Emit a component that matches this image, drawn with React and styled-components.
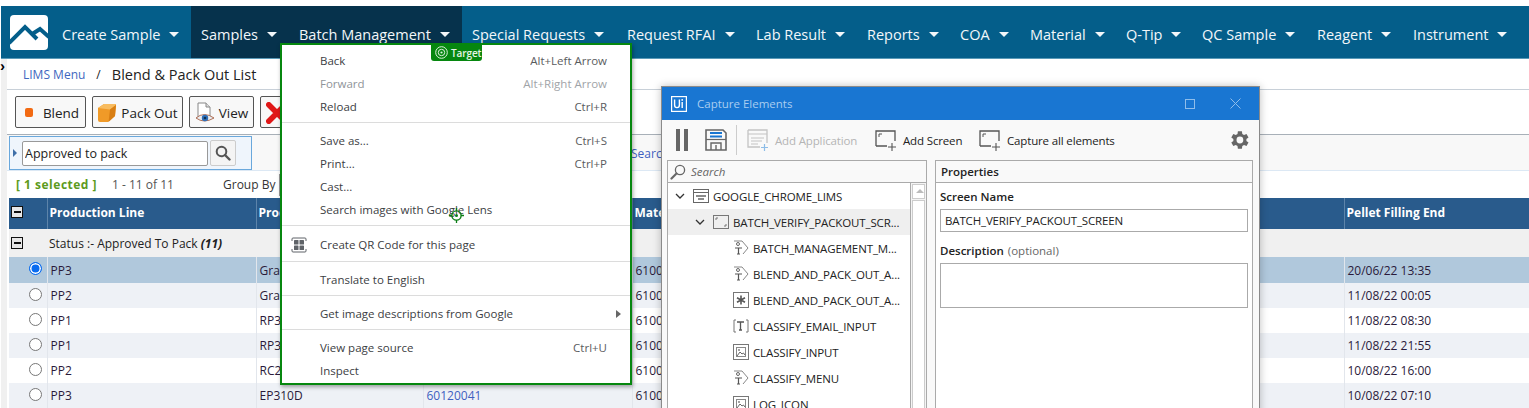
import React from "react"
import styled, { createGlobalStyle } from "styled-components"

const GlobalStyle = createGlobalStyle`
  html, body {
    margin: 0;
    height: 408px;
    overflow: hidden;
    background: #fff;
    font-family: "Open Sans", "Noto Sans", sans-serif;
  }
  * { box-sizing: border-box; }
`

const navItems = [
  { label: "Create Sample", width: 139 },
  { label: "Samples", width: 98, active: true },
  { label: "Batch Management", width: 173, active: true },
  { label: "Special Requests", width: 155 },
  { label: "Request RFAI", width: 129 },
  { label: "Lab Result", width: 111 },
  { label: "Reports", width: 93 },
  { label: "COA", width: 70 },
  { label: "Material", width: 96 },
  { label: "Q-Tip", width: 76 },
  { label: "QC Sample", width: 115 },
  { label: "Reagent", width: 96 },
  { label: "Instrument", width: 112 },
]

const rows = [
  { line: "PP3", product: "Grade", end: "20/06/22 13:35", selected: true },
  { line: "PP2", product: "Grade", end: "11/08/22 00:05", alt: true },
  { line: "PP1", product: "RP310", end: "11/08/22 08:30" },
  { line: "PP1", product: "RP310", end: "11/08/22 21:55", alt: true },
  { line: "PP2", product: "RC210", end: "10/08/22 16:00" },
  { line: "PP3", product: "EP310D", link: "60120041", end: "10/08/22 07:10", alt: true },
]

const menuGroups = [
  [
    { label: "Back", keys: "Alt+Left Arrow" },
    { label: "Forward", keys: "Alt+Right Arrow", disabled: true },
    { label: "Reload", keys: "Ctrl+R" },
  ],
  [
    { label: "Save as...", keys: "Ctrl+S" },
    { label: "Print...", keys: "Ctrl+P" },
    { label: "Cast..." },
    { label: "Search images with Google Lens" },
  ],
  [{ label: "Create QR Code for this page", qr: true }],
  [{ label: "Translate to English" }],
  [{ label: "Get image descriptions from Google", more: true }],
  [
    { label: "View page source", keys: "Ctrl+U" },
    { label: "Inspect" },
  ],
]

const treeItems = [
  { label: "GOOGLE_CHROME_LIMS", level: 0, icon: "app", open: true },
  { label: "BATCH_VERIFY_PACKOUT_SCR...", level: 1, icon: "screen", open: true, selected: true },
  { label: "BATCH_MANAGEMENT_M...", level: 2, icon: "tag" },
  { label: "BLEND_AND_PACK_OUT_A...", level: 2, icon: "tag" },
  { label: "BLEND_AND_PACK_OUT_A...", level: 2, icon: "star" },
  { label: "CLASSIFY_EMAIL_INPUT", level: 2, icon: "input" },
  { label: "CLASSIFY_INPUT", level: 2, icon: "image" },
  { label: "CLASSIFY_MENU", level: 2, icon: "tag" },
  { label: "LOG_ICON", level: 2, icon: "image" },
]

const Logo = () => (
  <svg width="38" height="36" viewBox="0 0 38 36">
    <rect x="0" y="0" width="38" height="35" rx="4" fill="#fff" />
    <path d="M-1 28 L15 12 L27 24" fill="none" stroke="#045e8a" strokeWidth="4" />
    <path d="M23 18.5 L30 14 L39 22" fill="none" stroke="#045e8a" strokeWidth="4" />
  </svg>
)

const CubeIcon = () => (
  <svg width="20" height="20" viewBox="0 0 20 20">
    <path d="M1 5 L7 1 H18 Q19 1 19 2 L18 13 L11 19 L3 19 Q1 19 1 17 Z" fill="#f09a28" />
    <path d="M1 5 L7 1 H18 Q19 1 19 2 L13 6.5 Z" fill="#f8bc60" />
    <path d="M13 6.5 L19 2 L18 13 L11.5 19 Z" fill="#d97f14" />
  </svg>
)

const ViewIcon = () => (
  <svg width="20" height="22" viewBox="0 0 20 22">
    <path d="M3 1 H11 L15 5 V16 H3 Z" fill="#fff" stroke="#888" />
    <path d="M11 1 V5 H15" fill="#ddd" stroke="#888" />
    <path d="M1 16 Q9 9 19 16 Q9 22 1 16 Z" fill="#e9edf2" stroke="#a05030" strokeWidth="0.8" />
    <circle cx="10" cy="16" r="3.2" fill="#2f6fb8" />
    <circle cx="10" cy="16" r="1.3" fill="#12304f" />
  </svg>
)

const CrossIcon = () => (
  <svg width="22" height="22" viewBox="0 0 24 24">
    <path d="M3 3 L21 21 M21 3 L3 21" stroke="#e01818" strokeWidth="6" strokeLinecap="round" />
  </svg>
)

const SearchIcon = ({ size = 16, color = "#555" }) => (
  <svg width={size} height={size} viewBox="0 0 16 16">
    <circle cx="6.5" cy="6.5" r="4.8" fill="none" stroke={color} strokeWidth="2" />
    <path d="M10 10 L14.5 14.5" stroke={color} strokeWidth="2.4" strokeLinecap="round" />
  </svg>
)

const TreeSearchIcon = () => (
  <svg width="16" height="16" viewBox="0 0 16 16">
    <circle cx="10" cy="6" r="4.6" fill="none" stroke="#666" strokeWidth="1.3" />
    <path d="M6.5 9.5 L1.5 14.5" stroke="#666" strokeWidth="2.2" strokeLinecap="round" />
  </svg>
)

const QrIcon = () => (
  <svg width="16" height="16" viewBox="0 0 16 16">
    <path d="M1 4 V2 Q1 1 2 1 H14 Q15 1 15 2 V4 M1 12 V14 Q1 15 2 15 H14 Q15 15 15 14 V12" fill="none" stroke="#5f6368" />
    <rect x="3" y="3" width="4.5" height="4.5" rx="0.6" fill="#5f6368" />
    <rect x="8.5" y="3" width="4.5" height="4.5" rx="0.6" fill="#5f6368" />
    <rect x="3" y="8.5" width="4.5" height="4.5" rx="0.6" fill="#5f6368" />
    <rect x="8.5" y="8.5" width="4.5" height="4.5" rx="0.6" fill="#5f6368" />
  </svg>
)

const TargetIcon = () => (
  <svg width="13" height="13" viewBox="0 0 13 13">
    <circle cx="6.5" cy="6.5" r="5.8" fill="none" stroke="#dff2df" />
    <circle cx="6.5" cy="6.5" r="3.2" fill="none" stroke="#dff2df" />
    <circle cx="6.5" cy="6.5" r="1.1" fill="#dff2df" />
  </svg>
)

const LensCursor = () => (
  <svg width="15" height="15" viewBox="0 0 15 15">
    <circle cx="7.5" cy="7.5" r="4.6" fill="none" stroke="#0b7d16" strokeWidth="1.4" />
    <circle cx="7.5" cy="7.5" r="1.5" fill="#0b7d16" />
    <path d="M7.5 0 V3 M7.5 12 V15 M0 7.5 H3 M12 7.5 H15" stroke="#0b7d16" strokeWidth="1.3" />
  </svg>
)

const UiLogo = () => (
  <svg width="16" height="16" viewBox="0 0 16 16">
    <rect x="0.6" y="0.6" width="14.8" height="14.8" fill="none" stroke="#fff" strokeWidth="1.2" />
    <path d="M3.6 3.5 V9 Q3.6 11.6 6 11.6 Q8.4 11.6 8.4 9 V3.5" fill="none" stroke="#fff" strokeWidth="1.4" />
    <path d="M11.2 6 V12" stroke="#fff" strokeWidth="1.4" />
    <circle cx="11.2" cy="3.9" r="0.9" fill="#fff" />
  </svg>
)

const SaveIcon = () => (
  <svg width="22" height="22" viewBox="0 0 22 22">
    <path d="M1 1 H18 L21 4 V21 H1 Z" fill="none" stroke="#666" strokeWidth="1.6" />
    <rect x="5" y="3" width="12" height="2" fill="#1976d2" />
    <rect x="5" y="6.5" width="12" height="2" fill="#1976d2" />
    <path d="M1 10.5 H21" stroke="#666" strokeWidth="1.2" />
    <path d="M6 21 V14 H16 V21 M11 16 V21" fill="none" stroke="#666" strokeWidth="1.4" />
  </svg>
)

const AddAppIcon = () => (
  <svg width="22" height="22" viewBox="0 0 22 22">
    <path d="M1 1 H20 V14 M1 1 V18 H13" fill="none" stroke="#c4c4c4" strokeWidth="1.3" />
    <path d="M1 5 H20 M4 9 H17 M4 12 H15 M4 15 H11" stroke="#c4c4c4" strokeWidth="1.1" />
    <path d="M17.5 15 V22 M14 18.5 H21" stroke="#8dbde8" strokeWidth="1.2" />
  </svg>
)

const AddScreenIcon = () => (
  <svg width="22" height="21" viewBox="0 0 22 21">
    <path d="M1 16 V1 H20 V11 M1 16 H12" fill="none" stroke="#555" strokeWidth="1.3" />
    <path d="M4 7 V4 H7" fill="none" stroke="#555" />
    <path d="M17 13 V21 M13 17 H21" stroke="#555" strokeWidth="1.1" />
  </svg>
)

const GearIcon = () => (
  <svg width="24" height="24" viewBox="0 0 24 24">
    <path
      fill="#666"
      d="M19.4 13a7.6 7.6 0 0 0 0-2l2.1-1.6-2-3.5-2.5 1a7.6 7.6 0 0 0-1.7-1L14.9 3.2h-4l-.4 2.7a7.6 7.6 0 0 0-1.7 1l-2.5-1-2 3.5L6.4 11a7.6 7.6 0 0 0 0 2l-2.1 1.6 2 3.5 2.5-1a7.6 7.6 0 0 0 1.7 1l.4 2.7h4l.4-2.7a7.6 7.6 0 0 0 1.7-1l2.5 1 2-3.5zM12.9 15.4a3.4 3.4 0 1 1 0-6.8 3.4 3.4 0 0 1 0 6.8z"
    />
  </svg>
)

const Chevron = () => (
  <svg width="10" height="7" viewBox="0 0 10 7">
    <path d="M1 1 L5 5 L9 1" fill="none" stroke="#333" strokeWidth="1.3" />
  </svg>
)

const TreeIcon = ({ type }) => {
  if (type === "app") {
    return (
      <svg width="16" height="16" viewBox="0 0 16 16">
        <rect x="0.5" y="1.5" width="15" height="13" fill="none" stroke="#666" />
        <path d="M1 4.5 H15" stroke="#666" />
        <path d="M3 8 H13 M5 11 H11" stroke="#666" strokeWidth="1.3" />
      </svg>
    )
  }
  if (type === "screen") {
    return (
      <svg width="16" height="16" viewBox="0 0 16 16">
        <rect x="0.5" y="1.5" width="15" height="13" fill="none" stroke="#777" />
        <path d="M3 6 V4 H5 M13 10 V12 H11" fill="none" stroke="#777" />
      </svg>
    )
  }
  if (type === "tag") {
    return (
      <svg width="16" height="16" viewBox="0 0 16 16">
        <path d="M1 1 H9 L15 8 L10 14" fill="none" stroke="#888" />
        <circle cx="5" cy="4" r="1.5" fill="none" stroke="#666" />
        <path d="M2 8 H9 M5.5 8 V14 M4 14 H7" fill="none" stroke="#555" strokeWidth="1.2" />
      </svg>
    )
  }
  if (type === "star") {
    return (
      <svg width="16" height="16" viewBox="0 0 16 16">
        <rect x="0.5" y="0.5" width="15" height="15" fill="none" stroke="#777" />
        <path d="M8 3.5 V12.5 M4 5.8 L12 10.2 M12 5.8 L4 10.2" stroke="#555" strokeWidth="1.6" />
      </svg>
    )
  }
  if (type === "input") {
    return (
      <svg width="16" height="16" viewBox="0 0 16 16">
        <path d="M3 2 H1 V14 H3 M13 2 H15 V14 H13" fill="none" stroke="#777" />
        <path d="M4 4 H11 M7.5 4 V12 M6 12 H9" fill="none" stroke="#555" strokeWidth="1.3" />
      </svg>
    )
  }
  return (
    <svg width="16" height="16" viewBox="0 0 16 16">
      <rect x="0.5" y="0.5" width="15" height="15" fill="none" stroke="#777" />
      <rect x="3.5" y="3.5" width="9" height="9" fill="none" stroke="#888" />
      <path d="M4 12 L7 8 L9 10 L10.5 9 L12 11" fill="none" stroke="#666" />
      <circle cx="6" cy="6" r="0.9" fill="#777" />
    </svg>
  )
}

const App = () => {
  return (
    <Page>
      <GlobalStyle />
      <Nav>
        <LogoSlot>
          <Logo />
        </LogoSlot>
        {navItems.map((item) => (
          <NavItem key={item.label} $width={item.width} $active={item.active}>
            {item.label}
            <Caret />
          </NavItem>
        ))}
      </Nav>
      <Body>
        <Gutter>
          <GutterArrow>›</GutterArrow>
        </Gutter>
        <Main>
          <Breadcrumb>
            <CrumbLink>LIMS Menu</CrumbLink>
            <CrumbSep>/</CrumbSep>
            <CrumbTitle>Blend &amp; Pack Out List</CrumbTitle>
          </Breadcrumb>
          <Toolbar>
            <ToolButton $width={71}>
              <BlendMark />
              Blend
            </ToolButton>
            <ToolButton $width={91}>
              <CubeIcon />
              Pack Out
            </ToolButton>
            <ToolButton $width={65}>
              <ViewIcon />
              View
            </ToolButton>
            <ToolButton $width={40} $start>
              <CrossIcon />
            </ToolButton>
          </Toolbar>
          <FilterBar>
            <FilterBox>
              <FilterArrow />
              <FilterInput readOnly value="Approved to pack" />
              <FilterSearch>
                <SearchIcon />
              </FilterSearch>
            </FilterBox>
            <SearchLink>Search</SearchLink>
          </FilterBar>
          <StatusRow>
            <Selected>[ 1 selected ]</Selected>
            <Pager>1 - 11 of 11</Pager>
            <GroupBy>Group By</GroupBy>
            <GroupBox />
          </StatusRow>
          <Grid>
            <colgroup>
              <col style={{ width: 38 }} />
              <col style={{ width: 209 }} />
              <col style={{ width: 167 }} />
              <col style={{ width: 209 }} />
              <col style={{ width: 712 }} />
              <col />
            </colgroup>
            <thead>
              <tr>
                <HeadCell>
                  <MinusBox $onDark />
                </HeadCell>
                <HeadCell>Production Line</HeadCell>
                <HeadCell>Product</HeadCell>
                <HeadCell>Material</HeadCell>
                <HeadCell>Material</HeadCell>
                <HeadCell>Pellet Filling End</HeadCell>
              </tr>
            </thead>
            <tbody>
              <GroupRow>
                <td>
                  <MinusBox />
                </td>
                <td colSpan={5}>
                  Status :- Approved To Pack <b><i>(11)</i></b>
                </td>
              </GroupRow>
              {rows.map((row, i) => (
                <DataRow key={i} $selected={row.selected} $alt={row.alt}>
                  <RadioCell>
                    <Radio $checked={row.selected} />
                  </RadioCell>
                  <DataCell>{row.line}</DataCell>
                  <DataCell>{row.product}</DataCell>
                  <DataCell>{row.link && <CellLink>{row.link}</CellLink>}</DataCell>
                  <DataCell>6100</DataCell>
                  <DataCell>{row.end}</DataCell>
                </DataRow>
              ))}
            </tbody>
          </Grid>
        </Main>
      </Body>

      <ContextMenu>
        <TargetBadge>
          <TargetIcon />
          Target
        </TargetBadge>
        <CursorMark>
          <LensCursor />
        </CursorMark>
        {menuGroups.map((group, g) => (
          <MenuGroup key={g} $first={g === 0}>
            {group.map((item) => (
              <MenuItem key={item.label} $disabled={item.disabled} $tall={item.qr}>
                <MenuIconSlot>{item.qr && <QrIcon />}</MenuIconSlot>
                <span>{item.label}</span>
                {item.keys && <MenuKeys>{item.keys}</MenuKeys>}
                {item.more && <MenuMore />}
              </MenuItem>
            ))}
          </MenuGroup>
        ))}
      </ContextMenu>

      <CaptureWindow>
        <TitleBar>
          <UiLogo />
          <WindowTitle>Capture Elements</WindowTitle>
          <MaxButton />
          <CloseButton>
            <svg width="11" height="11" viewBox="0 0 11 11">
              <path d="M0.5 0.5 L10.5 10.5 M10.5 0.5 L0.5 10.5" stroke="#8fbdea" />
            </svg>
          </CloseButton>
        </TitleBar>
        <CaptureTools>
          <PauseBars />
          <SaveIcon />
          <ToolDivider />
          <CaptureAction $width={128} $disabled>
            <AddAppIcon />
            Add Application
          </CaptureAction>
          <CaptureAction $width={104}>
            <AddScreenIcon />
            Add Screen
          </CaptureAction>
          <CaptureAction>
            <AddScreenIcon />
            Capture all elements
          </CaptureAction>
          <GearSlot>
            <GearIcon />
          </GearSlot>
        </CaptureTools>
        <Panes>
          <TreePane>
            <TreeSearch>
              <TreeSearchIcon />
              <em>Search</em>
            </TreeSearch>
            <TreeBody>
              <TreeList>
                {treeItems.map((item, i) => (
                  <TreeRow key={i} $level={item.level} $selected={item.selected}>
                    <ChevronSlot>{item.open && <Chevron />}</ChevronSlot>
                    <TreeIcon type={item.icon} />
                    <TreeLabel>{item.label}</TreeLabel>
                  </TreeRow>
                ))}
              </TreeList>
              <Scrollbar>
                <ScrollUp />
                <ScrollThumb />
              </Scrollbar>
            </TreeBody>
          </TreePane>
          <PropsPane>
            <PropsHead>Properties</PropsHead>
            <PropsBody>
              <FieldLabel>Screen Name</FieldLabel>
              <FieldInput>BATCH_VERIFY_PACKOUT_SCREEN</FieldInput>
              <FieldLabel>
                Description <Optional>(optional)</Optional>
              </FieldLabel>
              <FieldArea />
            </PropsBody>
          </PropsPane>
        </Panes>
      </CaptureWindow>
    </Page>
  )
}

export default App

const Page = styled.div`
  position: relative;
  width: 1529px;
  height: 408px;
  overflow: hidden;
  padding-top: 6px;
  color: #222;
`

const Nav = styled.nav`
  display: flex;
  height: 53px;
  margin-left: 1px;
  background: #045e8a;
  border-bottom: 1px solid #5a9ab8;
`

const LogoSlot = styled.div`
  display: flex;
  align-items: center;
  width: 51px;
  padding: 2px 0 0 9px;
`

const NavItem = styled.div`
  display: flex;
  align-items: center;
  flex: none;
  width: ${(p) => p.$width}px;
  padding: 4px 0 0 10px;
  font-size: 14.5px;
  color: #f2f7fa;
  white-space: nowrap;
  background: ${(p) => (p.$active ? "#06324c" : "transparent")};
`

const Caret = styled.span`
  margin-left: 9px;
  border-left: 5.5px solid transparent;
  border-right: 5.5px solid transparent;
  border-top: 5px solid #f2f7fa;
`

const Body = styled.div`
  display: flex;
  height: 349px;
  margin-left: 1px;
`

const Gutter = styled.div`
  flex: none;
  width: 6px;
  background: #f0f0f0;
`

const GutterArrow = styled.div`
  margin: 0 0 0 -1px;
  font: bold 15px/14px "Liberation Sans", sans-serif;
  color: #000;
`

const Main = styled.div`
  flex: 1;
  min-width: 0;
`

const Breadcrumb = styled.div`
  display: flex;
  align-items: center;
  height: 31px;
  padding: 1px 0 0 16px;
  border-bottom: 1px solid #c8d0d8;
`

const CrumbLink = styled.span`
  font-size: 12px;
  color: #3f68c0;
`

const CrumbSep = styled.span`
  margin: 0 11px 0 11px;
  font-size: 12px;
`

const CrumbTitle = styled.span`
  font-size: 14.5px;
  color: #222;
`

const Toolbar = styled.div`
  display: flex;
  align-items: center;
  gap: 6px;
  height: 45px;
  padding: 0 0 0 8px;
  border-bottom: 1px solid #a8b0b8;
`

const ToolButton = styled.div`
  display: flex;
  align-items: center;
  justify-content: ${(p) => (p.$start ? "flex-start" : "center")};
  gap: 4px;
  flex: none;
  width: ${(p) => p.$width}px;
  height: 32px;
  padding-left: ${(p) => (p.$start ? "5px" : "0")};
  padding-top: 1px;
  font-size: 13.5px;
  color: #222;
  background: #f8f8f8;
  border: 1px solid #555;
  border-radius: 2px;
`

const BlendMark = styled.span`
  width: 8px;
  height: 9px;
  margin: 0 6px 0 3px;
  background: #f26a12;
  border-radius: 2px;
`

const FilterBar = styled.div`
  display: flex;
  align-items: center;
  height: 36px;
  padding: 1px 0 0 2px;
  background: #f8f8f8;
  border-bottom: 1px solid #dce8f4;
`

const FilterBox = styled.div`
  display: flex;
  align-items: center;
  width: 243px;
  height: 34px;
  padding-left: 3px;
  background: #eff5fc;
  border: 1px solid #6aa8dc;
`

const FilterArrow = styled.span`
  margin-right: 5px;
  border-top: 4px solid transparent;
  border-bottom: 4px solid transparent;
  border-left: 4px solid #3f6fa8;
`

const FilterInput = styled.input`
  width: 186px;
  height: 25px;
  padding: 0 2px;
  font: 12.5px "Open Sans", sans-serif;
  color: #222;
  background: #fff;
  border: 1px solid #999;
  border-radius: 2px;
`

const FilterSearch = styled.div`
  display: flex;
  align-items: center;
  justify-content: center;
  width: 26px;
  height: 26px;
  margin-left: 2px;
  background: #f4f4f4;
  border: 1px solid #ccc;
  border-radius: 2px;
`

const SearchLink = styled.span`
  margin-left: 379px;
  font-size: 12px;
  color: #3f5fc0;
`

const StatusRow = styled.div`
  display: flex;
  align-items: center;
  height: 27px;
  padding-left: 9px;
  font-size: 12px;
`

const Selected = styled.span`
  width: 96px;
  font-weight: 700;
  letter-spacing: 0.5px;
  white-space: nowrap;
  color: #5d9a1c;
`

const Pager = styled.span`
  width: 111px;
  color: #555;
`

const GroupBy = styled.span`
  width: 56px;
  color: #333;
`

const GroupBox = styled.span`
  width: 20px;
  height: 22px;
  background: #fff;
  border: 1px solid #999;
`

const Grid = styled.table`
  width: 1520px;
  margin-left: 2px;
  table-layout: fixed;
  border-collapse: collapse;
  font-size: 12px;
`

const HeadCell = styled.th`
  height: 31px;
  padding: 0 2px 3px;
  text-align: left;
  font-size: 12px;
  font-weight: 700;
  color: #fff;
  white-space: nowrap;
  overflow: hidden;
  background: #295b8c;
  border-right: 1px solid #5d84aa;
  &:first-child { padding-left: 3px; }
  &:last-child { border-right: 0; }
`

const MinusBox = styled.span`
  position: relative;
  display: block;
  width: 12px;
  height: 12px;
  margin-left: -1px;
  background: #e8e8e8;
  border: 1.5px solid #111;
  &::after {
    content: "";
    position: absolute;
    left: 1.5px;
    right: 1.5px;
    top: 3.5px;
    height: 2px;
    background: #111;
  }
`

const GroupRow = styled.tr`
  height: 28px;
  background: #f0f0f0;
  td { padding: 0 2px 0 3px; color: #222; }
  td + td { padding-left: 2px; }
`

const DataRow = styled.tr`
  height: ${(p) => (p.$selected ? "26px" : "25px")};
  background: ${(p) => (p.$selected ? "#b0c8dc" : p.$alt ? "#eef1f6" : "#fff")};
`

const DataCell = styled.td`
  padding: 0 3px;
  color: #2a1a3a;
  white-space: nowrap;
  overflow: hidden;
  border-left: 1px solid #e2e6ec;
`

const RadioCell = styled.td`
  padding: 0 5px 3px 0;
`

const Radio = styled.span`
  display: block;
  width: 13px;
  height: 13px;
  margin-left: auto;
  border-radius: 50%;
  background: ${(p) => (p.$checked ? "#0a6cf0" : "#fff")};
  border: 1px solid ${(p) => (p.$checked ? "#0a6cf0" : "#777")};
  box-shadow: ${(p) => (p.$checked ? "inset 0 0 0 1.5px #fff" : "none")};
`

const CellLink = styled.span`
  color: #3f5fc0;
`

const ContextMenu = styled.div`
  position: absolute;
  left: 280px;
  top: 43px;
  width: 352px;
  height: 342px;
  padding-top: 4px;
  background: #fff;
  border: 2px solid #06870f;
  box-shadow: 1px 2px 4px rgba(0, 0, 0, 0.35);
  font-size: 11.5px;
  color: #3c4043;
`

const TargetBadge = styled.div`
  position: absolute;
  left: 149px;
  top: -1px;
  display: flex;
  align-items: center;
  gap: 3px;
  width: 51px;
  height: 17px;
  padding-left: 4px;
  font-size: 10px;
  font-weight: 600;
  letter-spacing: -0.1px;
  color: #e6f5e6;
  background: #06870f;
  border-radius: 0 0 3px 3px;
`

const CursorMark = styled.span`
  position: absolute;
  left: 167px;
  top: 163px;
  line-height: 0;
`

const MenuGroup = styled.div`
  padding: 0;
  border-top: ${(p) => (p.$first ? "0" : "1px solid #dcdcdc")};
  margin-top: ${(p) => (p.$first ? "0" : "4px")};
  padding-top: ${(p) => (p.$first ? "0" : "6px")};
`

const MenuItem = styled.div`
  display: flex;
  align-items: center;
  height: ${(p) => (p.$tall ? "25px" : "23px")};
  padding: 0 23px 0 9px;
  color: ${(p) => (p.$disabled ? "#8f9499" : "#3c4043")};
`

const MenuIconSlot = styled.span`
  display: flex;
  flex: none;
  width: 29px;
  margin-right: 0;
`

const MenuKeys = styled.span`
  margin-left: auto;
  color: inherit;
  opacity: 0.85;
`

const MenuMore = styled.span`
  margin-left: auto;
  margin-right: -14px;
  border-top: 4px solid transparent;
  border-bottom: 4px solid transparent;
  border-left: 5px solid #666;
`

const CaptureWindow = styled.div`
  position: absolute;
  left: 661px;
  top: 86px;
  display: flex;
  flex-direction: column;
  width: 599px;
  height: 340px;
  background: #f9f9f9;
  border: 1px solid #8a8a8a;
  box-shadow: 0 0 8px rgba(0, 0, 0, 0.25);
  font-size: 12px;
  color: #222;
`

const TitleBar = styled.div`
  display: flex;
  align-items: center;
  flex: none;
  height: 33px;
  padding-left: 9px;
  background: #1976d2;
`

const WindowTitle = styled.span`
  margin-left: 10px;
  font-size: 11.5px;
  color: #a9cdf0;
`

const MaxButton = styled.span`
  width: 10px;
  height: 10px;
  margin-left: auto;
  border: 1px solid #8fbdea;
`

const CloseButton = styled.span`
  display: flex;
  margin: 0 18px 0 35px;
`

const CaptureTools = styled.div`
  display: flex;
  align-items: center;
  flex: none;
  height: 40px;
  padding-left: 14px;
`

const PauseBars = styled.span`
  width: 12px;
  height: 22px;
  margin-right: 17px;
  border-left: 4px solid #666;
  border-right: 4px solid #666;
`

const ToolDivider = styled.span`
  width: 1px;
  height: 30px;
  margin: 0 10px 0 9px;
  background: #ccc;
`

const CaptureAction = styled.div`
  display: flex;
  align-items: center;
  gap: 6px;
  flex: none;
  width: ${(p) => (p.$width ? `${p.$width}px` : "auto")};
  white-space: nowrap;
  font-size: 11.5px;
  letter-spacing: -0.15px;
  color: ${(p) => (p.$disabled ? "#b5b5b5" : "#222")};
`

const GearSlot = styled.span`
  display: flex;
  margin: 0 0 0 auto;
  padding-right: 8px;
`

const Panes = styled.div`
  display: flex;
  flex: 1;
  min-height: 0;
  padding-left: 5px;
  gap: 8px;
`

const TreePane = styled.div`
  display: flex;
  flex-direction: column;
  width: 260px;
  background: #fff;
  border: 1px solid #aaa;
  border-bottom: 0;
`

const TreeSearch = styled.div`
  display: flex;
  align-items: center;
  gap: 5px;
  flex: none;
  height: 22px;
  padding-left: 2px;
  background: #f9f9f9;
  border-bottom: 1px solid #aaa;
  font-size: 11.5px;
  color: #666;
`

const TreeBody = styled.div`
  display: flex;
  flex: 1;
  min-height: 0;
`

const TreeList = styled.div`
  flex: 1;
  min-width: 0;
`

const TreeRow = styled.div`
  display: flex;
  align-items: center;
  height: 26px;
  padding-left: ${(p) => 7 + p.$level * 20}px;
  background: ${(p) => (p.$selected ? "#efefef" : "transparent")};
`

const ChevronSlot = styled.span`
  display: flex;
  flex: none;
  width: 18px;
`

const TreeLabel = styled.span`
  margin-left: 4px;
  font-size: 11.5px;
  letter-spacing: -0.12px;
  white-space: nowrap;
`

const Scrollbar = styled.div`
  display: flex;
  flex-direction: column;
  gap: 1px;
  flex: none;
  width: 16px;
  padding: 1px 1px 0;
  border-left: 1px solid #aaa;
  background: #f4f4f4;
`

const ScrollUp = styled.div`
  position: relative;
  height: 15px;
  background: #fff;
  border: 1px solid #ccc;
  &::after {
    content: "";
    position: absolute;
    left: 3px;
    top: 4px;
    border-left: 4px solid transparent;
    border-right: 4px solid transparent;
    border-bottom: 4px solid #bbb;
  }
`

const ScrollThumb = styled.div`
  flex: 1;
  background: #fff;
  border: 1px solid #ccc;
`

const PropsPane = styled.div`
  display: flex;
  flex-direction: column;
  width: 318px;
  background: #fff;
  border: 1px solid #aaa;
  border-bottom: 0;
`

const PropsHead = styled.div`
  display: flex;
  align-items: center;
  flex: none;
  height: 22px;
  padding-left: 5px;
  font-size: 11.5px;
  font-weight: 600;
  background: #f9f9f9;
  border-bottom: 1px solid #aaa;
`

const PropsBody = styled.div`
  padding: 0 4px;
`

const FieldLabel = styled.div`
  display: flex;
  align-items: center;
  gap: 4px;
  height: 26px;
  font-size: 11.5px;
  font-weight: 600;
  &:not(:first-child) { height: 31px; padding-top: 6px; }
`

const Optional = styled.span`
  font-weight: 400;
  color: #666;
`

const FieldInput = styled.div`
  display: flex;
  align-items: center;
  height: 23px;
  padding-left: 4px;
  font-size: 11.5px;
  letter-spacing: -0.15px;
  border: 1px solid #aaa;
`

const FieldArea = styled.div`
  height: 45px;
  border: 1px solid #aaa;
`
